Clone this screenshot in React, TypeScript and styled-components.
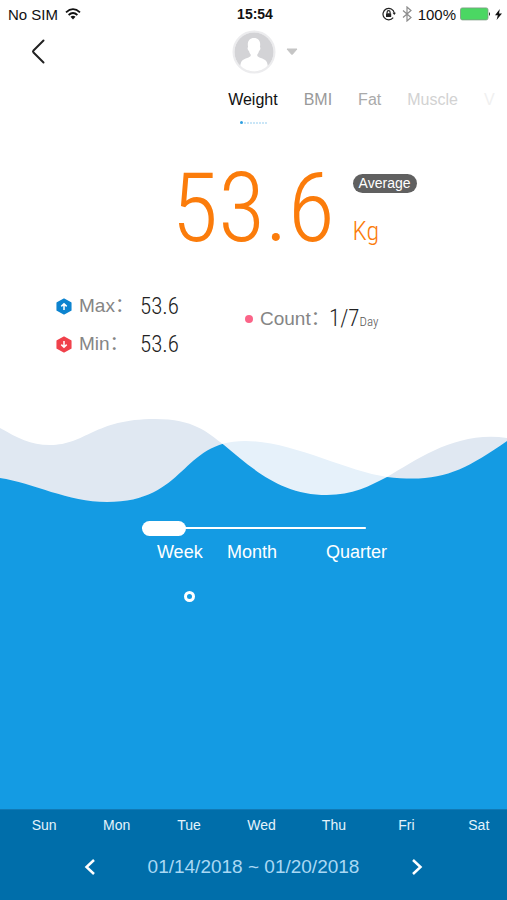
import React, { useState } from "react";
import styled, { createGlobalStyle } from "styled-components";

const GlobalStyle = createGlobalStyle`
  *, *::before, *::after { box-sizing: border-box; }
  body {
    margin: 0;
    background: #fff;
    font-family: "Liberation Sans", Arial, "Noto Sans CJK SC", sans-serif;
  }
  button { font: inherit; color: inherit; background: none; border: 0; padding: 0; cursor: pointer; }
  svg { display: block; }
`;

const numerals = `font-family: "Roboto Condensed", "Noto Sans CJK SC", sans-serif;`;

const Screen = styled.div`
  min-height: 100vh;
  display: flex;
  flex-direction: column;
  overflow: hidden;
`;

const StatusBar = styled.div`
  height: 28px;
  padding: 0 5px 0 8px;
  display: grid;
  grid-template-columns: 1fr auto 1fr;
  align-items: center;
  font-size: 15px;
  color: #111;
`;

const StatusGroup = styled.div<{ $end?: boolean }>`
  display: flex;
  align-items: center;
  gap: ${(p) => (p.$end ? 6 : 7)}px;
  justify-content: ${(p) => (p.$end ? "flex-end" : "flex-start")};
`;

const Power = styled.span`
  display: flex;
  align-items: center;
  gap: 4px;
`;

const Clock = styled.time`
  font-weight: 700;
  font-size: 14px;
`;

const Header = styled.header`
  height: 48px;
  padding: 0 28px;
  display: grid;
  grid-template-columns: 1fr auto 1fr;
  align-items: center;
`;

const BackButton = styled.button`
  justify-self: start;
`;

const ProfileButton = styled.button`
  display: flex;
  align-items: center;
  gap: 10px;
  margin-right: -22px;
`;

const TabStrip = styled.nav`
  height: 50px;
  padding: 12px 0 0 45%;
  overflow: hidden;
`;

const Tabs = styled.div`
  display: flex;
  gap: 26px;
`;

const Tab = styled.button<{ $tone: string }>`
  font-size: 16px;
  line-height: 24px;
  color: ${(p) => p.$tone};
`;

const Pager = styled.div`
  display: flex;
  align-items: center;
  gap: 1px;
  padding: 9px 0 0 12px;
`;

const PageDot = styled.i<{ $active?: boolean }>`
  width: ${(p) => (p.$active ? 3 : 2)}px;
  height: ${(p) => (p.$active ? 3 : 2)}px;
  border-radius: 50%;
  background: ${(p) => (p.$active ? "#2d9fe0" : "#b9def5")};
`;

const Reading = styled.section`
  display: grid;
  grid-template-columns: 66% 1fr;
  padding: 36px 0 38px;
  color: #fb7c0b;
`;

const BigNumber = styled.strong`
  ${numerals}
  justify-self: end;
  font-size: 96px;
  line-height: 92px;
  font-weight: 300;
`;

const ReadingSide = styled.div`
  display: flex;
  flex-direction: column;
  align-items: flex-start;
  padding: 12px 0 0 18px;
  gap: 22px;
`;

const Badge = styled.span`
  padding: 0 6px;
  border-radius: 10px;
  background: #606060;
  color: #fff;
  font-size: 14px;
  line-height: 19px;
`;

const Unit = styled.span`
  ${numerals}
  font-size: 26px;
  line-height: 32px;
  font-weight: 300;
`;

const Stats = styled.section`
  display: grid;
  grid-template-columns: 189px 1fr;
  align-items: start;
  padding: 0 0 0 56px;
`;

const StatList = styled.div`
  display: flex;
  flex-direction: column;
  gap: 10px;
`;

const Stat = styled.div`
  display: flex;
  align-items: center;
  height: 28px;
`;

const CountStat = styled(Stat)`
  margin-top: 13px;
`;

const StatName = styled.span<{ $width: number }>`
  width: ${(p) => p.$width}px;
  padding-left: 7px;
  font-size: 19px;
  line-height: 28px;
  height: 28px;
  color: #858585;
  white-space: nowrap;
`;

const StatValue = styled.span`
  ${numerals}
  font-size: 23px;
  line-height: 28px;
  padding-top: 2px;
  font-weight: 300;
  color: #222;
`;

const Small = styled.small`
  font-size: 13px;
  color: #555;
`;

const CountDot = styled.i`
  width: 8px;
  height: 8px;
  border-radius: 50%;
  background: #fb6488;
`;

const Waves = styled.svg`
  width: 100%;
  height: 90px;
  margin-top: 59px;
`;

const ChartPanel = styled.section`
  flex: 1;
  background: #149be3;
  color: #fff;
  display: flex;
  flex-direction: column;
`;

const RangePicker = styled.div`
  width: 49%;
  margin-left: 28%;
  padding-top: 13px;
`;

const Slider = styled.input`
  appearance: none;
  display: block;
  width: 90%;
  height: 16px;
  margin: 0;
  background: linear-gradient(#fff, #fff) center / 100% 2px no-repeat;
  &::-webkit-slider-thumb {
    appearance: none;
    width: 44px;
    height: 15px;
    border-radius: 8px;
    background: #fff;
  }
`;

const RangeLabels = styled.div`
  display: grid;
  grid-template-columns: 70px 99px auto;
  justify-items: start;
  padding-left: 15px;
  font-size: 18px;
  line-height: 32px;
`;

const Week = styled.div`
  display: grid;
  grid-template-columns: repeat(7, 1fr);
  margin: 0 -8px 0 8px;
  justify-items: center;
`;

const Point = styled.i<{ $column: number }>`
  grid-column: ${(p) => p.$column};
  width: 11px;
  height: 11px;
  margin-top: 23px;
  border: 3px solid #fff;
  border-radius: 50%;
`;

const Footer = styled.footer`
  height: 91px;
  background: #006eaa;
  border-top: 1px solid #1079b5;
  color: #e4f3fc;
`;

const Day = styled.span`
  font-size: 14px;
  line-height: 30px;
`;

const DateNav = styled.div`
  display: flex;
  align-items: center;
  justify-content: space-between;
  padding: 10px 84px 0;
  height: 44px;
`;

const DateRange = styled.span`
  font-size: 19px;
  color: #a9d8f4;
`;

const WifiIcon = () => (
  <svg width="16" height="12" viewBox="0 0 16 12" fill="none" stroke="#111" strokeWidth="1.8">
    <path d="M1 4.3Q8-2 15 4.3" />
    <path d="M3.6 7Q8 3.1 12.4 7" />
    <path d="M8 11.5 5.5 8.8Q8 6.9 10.5 8.8Z" fill="#111" stroke="none" />
  </svg>
);

const LockIcon = () => (
  <svg width="14" height="14" viewBox="0 0 14 14" fill="none" stroke="#222" strokeWidth="1.2">
    <path d="M11.2 10.6A5.7 5.7 0 1 1 12.3 6" />
    <path d="m10.5 5.8 1.8 2.3 1.6-2.3Z" fill="#222" stroke="none" />
    <rect x="4" y="6.3" width="5.2" height="3.8" rx=".4" fill="#222" stroke="none" />
    <path d="M5.1 6.5V5.2a1.5 1.5 0 0 1 3 0v1.3" />
  </svg>
);

const BluetoothIcon = () => (
  <svg width="10" height="16" viewBox="0 0 10 16" fill="none" stroke="#8c8c8c" strokeWidth="1.2">
    <path d="m1 4.5 8 7L5 15V1l4 3.5-8 7" />
  </svg>
);

const BatteryIcon = () => (
  <svg width="31" height="14" viewBox="0 0 31 14">
    <rect x=".5" y=".9" width="27.5" height="12" rx="1.8" fill="#4bd763" stroke="#7f9b83" strokeWidth=".8" />
    <path d="M29 5a2.5 2.5 0 0 1 0 4Z" fill="#222" />
  </svg>
);

const BoltIcon = () => (
  <svg width="7" height="11" viewBox="0 0 7 11">
    <path d="M4.8 0 0 6.3h2.8L1.6 11 7 4.4H4Z" fill="#111" />
  </svg>
);

const AvatarIcon = () => (
  <svg width="44" height="44" viewBox="0 0 44 44">
    <defs>
      <clipPath id="face"><circle cx="22" cy="22" r="19.5" /></clipPath>
    </defs>
    <circle cx="22" cy="22" r="20.5" fill="#fff" stroke="#ececee" strokeWidth="2" />
    <circle cx="22" cy="22" r="19.5" fill="#d3d3d6" />
    <path
      clipPath="url(#face)"
      fill="#fff"
      d="M22 8c3.900 0 6.200 2.600 6.200 6.300 0 1.200-.1 2-.3 2.700 1 .5.5 3.400-.9 4-.3 1.600-.9 2.700-1.700 3.500v1.500c2.100 2.300 8 2.200 9.700 6.400.9 2.200 1 5.700 1 9.600H8c0-3.900.1-7.400 1-9.600 1.700-4.200 7.600-4.100 9.700-6.400v-1.500c-.8-.8-1.400-1.900-1.700-3.500-1.400-.6-1.900-3.500-.9-4-.2-.7-.3-1.500-.3-2.700C15.800 10.600 18.100 8 22 8Z"
    />
  </svg>
);

const HexIcon = ({ color, down }: { color: string; down?: boolean }) => (
  <svg width="16" height="17" viewBox="0 0 16 17">
    <path d="M8 1.2 14.800 4.800V12.200L8 15.800 1.200 12.200V4.800Z" fill={color} stroke={color} strokeWidth="1.5" strokeLinejoin="round" />
    <path
      d={down ? "M8 5v6M5.300 8.600 8 11.300l2.700-2.700" : "M8 12V6M5.300 8.400 8 5.700l2.700 2.700"}
      fill="none"
      stroke="#fff"
      strokeWidth="1.5"
    />
  </svg>
);

const Chevron = ({ right }: { right?: boolean }) => (
  <svg width="12" height="18" viewBox="0 0 12 18" fill="none" stroke="#fff" strokeWidth="2.5">
    <path d={right ? "m2 2 7.500 7L2 16" : "m10 2-7.500 7 7.500 7"} />
  </svg>
);

const WAVE_A =
  "M0 11C18 21 30 28 50 28C86 28 94 2 155 2C194 2 207 15 224 28C252 51 280 78 327 78C352 78 370 69 387 60C420 41 457 14 507 21V91H0Z";
const WAVE_B =
  "M0 61C33 66 68 85 107 85C187 85 180 24 245 24C292 24 345 54 387 60C440 66 462 55 507 24V91H0Z";

const tabs: [string, string][] = [
  ["Weight", "#111"],
  ["BMI", "#999"],
  ["Fat", "#aaa"],
  ["Muscle", "#d2d2d2"],
  ["V", "#f0f0f0"],
];
const days = ["Sun", "Mon", "Tue", "Wed", "Thu", "Fri", "Sat"];
const ranges = ["Week", "Month", "Quarter"];

export default function App() {
  const [range, setRange] = useState(0);
  return (
    <Screen>
      <GlobalStyle />
      <StatusBar>
        <StatusGroup>No SIM <WifiIcon /></StatusGroup>
        <Clock>15:54</Clock>
        <StatusGroup $end>
          <LockIcon />
          <BluetoothIcon />
          <Power>100% <BatteryIcon /><BoltIcon /></Power>
        </StatusGroup>
      </StatusBar>
      <Header>
        <BackButton aria-label="Back">
          <svg width="20" height="26" viewBox="0 0 20 26" fill="none" stroke="#222" strokeWidth="2" strokeLinecap="round">
            <path d="M15.500 1.500 5.500 11.500Q4.500 12.500 5.500 13.500L15.500 23.500" />
          </svg>
        </BackButton>
        <ProfileButton aria-label="Choose profile">
          <AvatarIcon />
          <svg width="12" height="8" viewBox="0 0 12 8"><path d="M1 1h10L6.500 6.200q-.5.5-1 0Z" fill="#c5c5c5" stroke="#c5c5c5" strokeLinejoin="round" /></svg>
        </ProfileButton>
      </Header>
      <TabStrip>
        <Tabs>
          {tabs.map(([name, tone]) => <Tab key={name} $tone={tone}>{name}</Tab>)}
        </Tabs>
        <Pager>
          {Array.from({ length: 9 }, (_, i) => <PageDot key={i} $active={i === 0} />)}
        </Pager>
      </TabStrip>
      <Reading>
        <BigNumber>53.6</BigNumber>
        <ReadingSide>
          <Badge>Average</Badge>
          <Unit>Kg</Unit>
        </ReadingSide>
      </Reading>
      <Stats>
        <StatList>
          <Stat><HexIcon color="#0c83cf" /><StatName $width={68}>Max：</StatName><StatValue>53.6</StatValue></Stat>
          <Stat><HexIcon color="#f0414b" down /><StatName $width={68}>Min：</StatName><StatValue>53.6</StatValue></Stat>
        </StatList>
        <CountStat>
          <CountDot /><StatName $width={76}>Count：</StatName>
          <StatValue>1/7<Small>Day</Small></StatValue>
        </CountStat>
      </Stats>
      <Waves viewBox="0 0 507 90" preserveAspectRatio="none" aria-hidden="true">
        <defs><clipPath id="overlap"><path d={WAVE_B} /></clipPath></defs>
        <path d={WAVE_A} fill="#e0e8f2" />
        <path d={WAVE_B} fill="#e6f1fa" />
        <path d={WAVE_A} fill="#149be3" clipPath="url(#overlap)" />
      </Waves>
      <ChartPanel>
        <RangePicker>
          <Slider type="range" min={0} max={2} value={range} aria-label="Period" onChange={(e) => setRange(Number(e.target.value))} />
          <RangeLabels>
            {ranges.map((r, i) => <button key={r} onClick={() => setRange(i)}>{r}</button>)}
          </RangeLabels>
        </RangePicker>
        <Week><Point $column={3} /></Week>
      </ChartPanel>
      <Footer>
        <Week>{days.map((d) => <Day key={d}>{d}</Day>)}</Week>
        <DateNav>
          <button aria-label="Previous week"><Chevron /></button>
          <DateRange>01/14/2018 ~ 01/20/2018</DateRange>
          <button aria-label="Next week"><Chevron right /></button>
        </DateNav>
      </Footer>
    </Screen>
  );
}
